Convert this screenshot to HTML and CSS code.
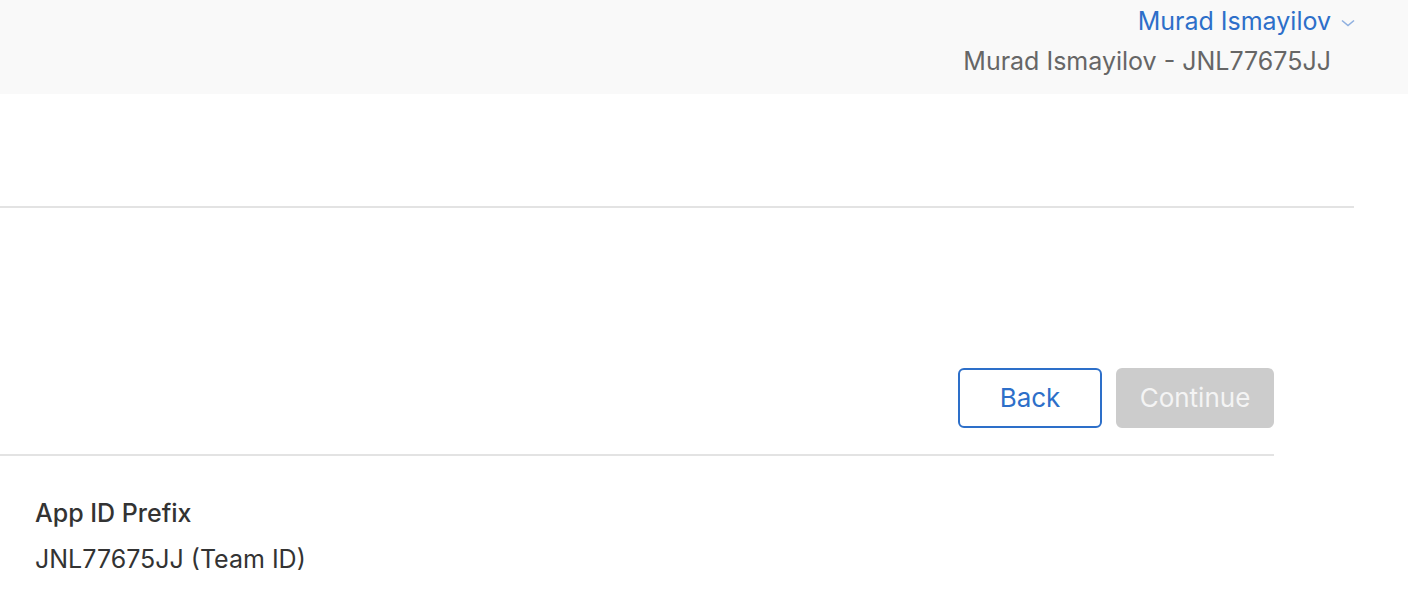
FILE: index.html
```html
<!DOCTYPE html>
<html lang="en">

<head>
    <meta charset="UTF-8">
    <title>Register an App ID</title>
    <link rel="stylesheet" href="styles.css">
</head>

<body>
    <div class="header">
        <div class="account">
            <div class="account-name">
                Murad Ismayilov
                <svg class="chevron" width="14" height="8" viewBox="0 0 14 8">
                    <path d="M1 1.5 L7 6.5 L13 1.5" fill="none" stroke="#8fb0e0" stroke-width="1.6" />
                </svg>
            </div>
            <div class="team-name">Murad Ismayilov - JNL77675JJ</div>
        </div>
    </div>

    <div class="content">
        <div class="top-section"></div>
        <div class="form-section">
            <div class="actions">
                <button class="btn btn-back">Back</button>
                <button class="btn btn-continue" disabled>Continue</button>
            </div>
        </div>
        <div class="details">
            <div class="detail-label">App ID Prefix</div>
            <div class="detail-value">JNL77675JJ (Team ID)</div>
        </div>
    </div>
</body>

</html>
```

FILE: styles.css
```css
body {
    margin: 0;
    font-family: "Inter", "Liberation Sans", sans-serif;
    background-color: #fff;
    color: #333;
}

.header {
    height: 94px;
    background-color: #f9f9f9;
    display: flex;
    justify-content: flex-end;
}

.account {
    display: flex;
    flex-direction: column;
    align-items: flex-end;
    padding-right: 77px;
    padding-top: 6px;
}

.account-name {
    position: relative;
    font-size: 25px;
    color: #2d6fc9;
    line-height: 30px;
}

.chevron {
    position: absolute;
    right: -24px;
    top: 13px;
}

.team-name {
    margin-top: 10px;
    font-size: 25px;
    line-height: 30px;
    color: #666;
}

.content {
    width: 1354px;
}

.top-section {
    height: 112px;
    border-bottom: 2px solid #e3e3e3;
}

.form-section {
    width: 1274px;
    height: 246px;
    border-bottom: 2px solid #e3e3e3;
    display: flex;
    align-items: flex-start;
    justify-content: flex-end;
}

.actions {
    display: flex;
    gap: 14px;
    margin-top: 160px;
}

.btn {
    height: 60px;
    padding: 0;
    font-family: inherit;
    font-size: 26px;
    line-height: 30px;
    border-radius: 6px;
    cursor: pointer;
}

.btn-back {
    width: 144px;
    background-color: #fff;
    color: #2d6fc9;
    border: 2px solid #2d6fc9;
}

.btn-continue {
    width: 158px;
    background-color: #cccccc;
    color: #f4f4f4;
    border: none;
    cursor: default;
}

.details {
    padding: 40px 35px;
}

.detail-label {
    font-size: 25px;
    font-weight: 500;
    line-height: 34px;
}

.detail-value {
    margin-top: 12px;
    font-size: 25px;
    line-height: 34px;
}
```
